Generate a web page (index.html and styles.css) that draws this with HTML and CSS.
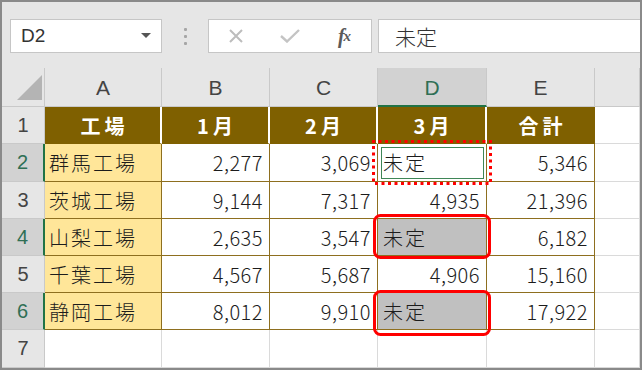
FILE: index.html
```html
<!DOCTYPE html>
<html lang="ja">
<head>
<meta charset="utf-8">
<title>Excel</title>
<link rel="stylesheet" href="styles.css">
</head>
<body>
<div class="frame">
  <div class="toolbar">
    <div class="namebox"><span>D2</span><span class="caret"></span></div>
    <div class="vdots"><i></i><i></i><i></i></div>
    <div class="fbtns">
      <span class="fbtn"><svg width="16" height="16" viewBox="0 0 16 16"><path d="M2 2L14 14M14 2L2 14" stroke="#bdbdbd" stroke-width="2" fill="none"/></svg></span>
      <span class="fbtn"><svg width="22" height="14" viewBox="0 0 22 14"><path d="M2 7L8 12.5L20 1" stroke="#c4c4c4" stroke-width="2.4" fill="none"/></svg></span>
      <span class="fbtn fx"><i>f</i><sub>x</sub></span>
    </div>
    <div class="finput">未定</div>
  </div>
  <div class="sheet">
    <div class="ch corner"><span class="tri"></span></div>
    <div class="ch">A</div><div class="ch">B</div><div class="ch">C</div><div class="ch sel">D</div><div class="ch">E</div><div class="ch"></div>

    <div class="rh">1</div>
    <div class="c hd">工場</div><div class="c hd">1月</div><div class="c hd">2月</div><div class="c hd">3月</div><div class="c hd last">合計</div><div class="c e"></div>

    <div class="rh sel">2</div>
    <div class="c a txt">群馬工場</div><div class="c num">2,277</div><div class="c num">3,069</div><div class="c txt d active">未定</div><div class="c num">5,346</div><div class="c e"></div>

    <div class="rh">3</div>
    <div class="c a txt">茨城工場</div><div class="c num">9,144</div><div class="c num">7,317</div><div class="c num">4,935</div><div class="c num">21,396</div><div class="c e"></div>

    <div class="rh sel">4</div>
    <div class="c a txt">山梨工場</div><div class="c num">2,635</div><div class="c num">3,547</div><div class="c txt d gray">未定</div><div class="c num">6,182</div><div class="c e"></div>

    <div class="rh">5</div>
    <div class="c a txt">千葉工場</div><div class="c num">4,567</div><div class="c num">5,687</div><div class="c num">4,906</div><div class="c num">15,160</div><div class="c e"></div>

    <div class="rh sel">6</div>
    <div class="c a txt">静岡工場</div><div class="c num">8,012</div><div class="c num">9,910</div><div class="c txt d gray">未定</div><div class="c num">17,922</div><div class="c e"></div>

    <div class="rh">7</div>
    <div class="c e"></div><div class="c e"></div><div class="c e"></div><div class="c e"></div><div class="c e"></div><div class="c e"></div>
  </div>
  <svg class="marks" width="642" height="370" viewBox="0 0 642 370">
    <path d="M373.5 141.5H490.5V183.5H373.5Z" fill="none" stroke="#ff0000" stroke-width="3" stroke-dasharray="0 6.5" stroke-linecap="square"/>
    <rect x="374.5" y="215.5" width="115" height="42" rx="6" fill="none" stroke="#ff0000" stroke-width="3"/>
    <rect x="374.5" y="291.5" width="115" height="43" rx="6" fill="none" stroke="#ff0000" stroke-width="3"/>
  </svg>
</div>
</body>
</html>
```

FILE: styles.css
```css
* { box-sizing: border-box; }
html, body { margin: 0; padding: 0; }
body { width: 642px; height: 370px; overflow: hidden; background: #fff; }

.frame {
  position: relative;
  width: 642px;
  height: 370px;
  border: 2px solid #8a8a8a;
  background: #e6e6e6;
  display: flex;
  flex-direction: column;
  overflow: hidden;
}

.toolbar {
  flex: none;
  height: 66px;
  display: flex;
  align-items: flex-start;
  padding: 17px 0 0 8px;
}

.namebox {
  width: 152px;
  height: 34px;
  background: #fff;
  border: 1px solid #c6c6c6;
  display: flex;
  align-items: center;
  justify-content: space-between;
  padding: 0 10px;
  font: 19px "Liberation Sans", Arial, sans-serif;
  color: #333;
}
.caret {
  width: 0; height: 0;
  border-left: 5px solid transparent;
  border-right: 5px solid transparent;
  border-top: 5px solid #555;
  margin-top: -2px;
}

.vdots {
  width: 46px;
  height: 34px;
  display: flex;
  flex-direction: column;
  align-items: center;
  justify-content: center;
  gap: 4px;
}
.vdots i { display: block; width: 3px; height: 3px; background: #a6a6a6; border-radius: 1px; }

.fbtns {
  width: 164px;
  height: 34px;
  background: #fff;
  border: 1px solid #c6c6c6;
  display: flex;
  align-items: center;
  padding-left: 12px;
  gap: 24px;
}
.fbtn { width: 30px; display: flex; justify-content: center; align-items: center; }
.fx {
  font: italic bold 20px "Liberation Serif", "Times New Roman", serif;
  color: #5a5a5a;
  letter-spacing: -1px;
}
.fx i { font-style: italic; }
.fx sub { font-size: 15px; vertical-align: -2px; }

.finput {
  flex: 1;
  height: 34px;
  margin-left: 6px;
  background: #fff;
  border: 1px solid #c6c6c6;
  border-right: none;
  padding-left: 16px;
  display: flex;
  align-items: center;
  font: 300 21px "Noto Sans CJK JP", sans-serif;
  color: #333;
}

.sheet {
  flex: 1;
  display: grid;
  grid-template-columns: 43px 117px 108px 108px 109px 108px 45px;
  grid-template-rows: 39px 37px 38px 37px 37px 37px 37px 38px;
  background: #fff;
}

.ch {
  background: #e6e6e6;
  border-right: 1px solid #c9c9c9;
  border-bottom: 1px solid #c9c9c9;
  display: flex;
  align-items: center;
  justify-content: center;
  font: 21px "Liberation Sans", Arial, sans-serif;
  color: #444;
  padding-top: 2px;
}
.ch.sel {
  background: #d2d2d2;
  border-bottom: 2px solid #217346;
  color: #2f6f55;
}
.corner {
  justify-content: flex-end;
  align-items: flex-end;
  padding: 0 2px 6px 0;
}
.tri {
  width: 25px; height: 25px;
  background: #b4b4b4;
  clip-path: polygon(100% 0, 100% 100%, 0 100%);
}

.rh {
  background: #e6e6e6;
  border-right: 1px solid #c9c9c9;
  border-bottom: 1px solid #c9c9c9;
  display: flex;
  align-items: center;
  justify-content: center;
  font: 20px "Liberation Sans", Arial, sans-serif;
  color: #444;
}
.rh.sel {
  background: #d2d2d2;
  border-right: 2px solid #217346;
  color: #2f6f55;
}

.c {
  display: flex;
  align-items: center;
  border-right: 1px solid #8e6f1f;
  border-bottom: 1px solid #8e6f1f;
  padding: 0 6px 0 5px;
  font: 300 20px "Noto Sans CJK JP", sans-serif;
  color: #1c1c1c;
  white-space: nowrap;
}
.num { justify-content: flex-end; letter-spacing: 0.5px; }
.txt { letter-spacing: 2px; }
.a { background: #ffe699; padding-left: 4px; }
.hd {
  background: #7f6000;
  color: #fff;
  font-weight: bold;
  justify-content: center;
  border-right: 2px solid #fff;
  border-bottom: 1px solid #7f6000;
  letter-spacing: 4px;
  padding: 0 0 0 4px;
}
.hd.last { border-right: 1px solid #7f6000; }
.e { border-right: 1px solid #dadada; border-bottom: 1px solid #dadada; }
.gray { background: #c0c0c0; }
.active { outline: 1px solid #3f8657; outline-offset: -4px; }

.marks {
  position: absolute;
  top: -2px;
  left: -2px;
  pointer-events: none;
}
```
